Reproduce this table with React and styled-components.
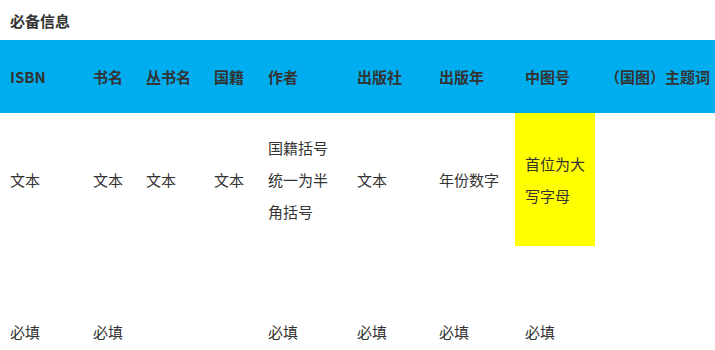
import React from 'react';
import styled, { createGlobalStyle } from 'styled-components';

const GlobalStyle = createGlobalStyle`
  html, body {
    margin: 0;
    padding: 0;
    background: #fff;
  }
  body {
    font-family: "Noto Sans CJK SC", "Noto Sans", sans-serif;
    color: #333;
  }
`

const Page = styled.div`
  width: 715px;
  overflow: hidden;
`

const Title = styled.h3`
  margin: 0;
  height: 40px;
  line-height: 42px;
  padding-left: 10px;
  font-size: 15px;
  font-weight: 700;
  color: #333;
`

const Table = styled.table`
  border-collapse: collapse;
  table-layout: fixed;
  width: 715px;
  font-size: 15px;
`

const HeadRow = styled.tr`
  background: #00aeef;
  height: 73px;
`

const Th = styled.th`
  padding: 0 10px;
  text-align: left;
  font-weight: 700;
  color: #333;
  white-space: nowrap;
  vertical-align: middle;
`

const Row = styled.tr`
  height: ${p => p.$h}px;
`

const Td = styled.td`
  padding: 18px 10px;
  line-height: 32px;
  vertical-align: middle;
  color: #333;
  background: ${p => (p.$mark ? '#ffff00' : 'transparent')};
  word-break: break-all;
`

const columns = [
  { name: 'ISBN', width: 83 },
  { name: '书名', width: 53 },
  { name: '丛书名', width: 68 },
  { name: '国籍', width: 54 },
  { name: '作者', width: 89 },
  { name: '出版社', width: 82 },
  { name: '出版年', width: 86 },
  { name: '中图号', width: 80 },
  { name: '（国图）主题词', width: 120 },
]

const formatRow = ['文本', '文本', '文本', '文本', '国籍括号统一为半角括号', '文本', '年份数字', '首位为大写字母', '']
const requiredRow = ['必填', '必填', '', '', '必填', '必填', '必填', '必填', '']

export default function App() {
  return (
    <Page>
      <GlobalStyle />
      <Title>必备信息</Title>
      <Table>
        <colgroup>
          {columns.map(c => <col key={c.name} style={{ width: c.width }} />)}
        </colgroup>
        <thead>
          <HeadRow>
            {columns.map(c => <Th key={c.name}>{c.name}</Th>)}
          </HeadRow>
        </thead>
        <tbody>
          <Row $h={133}>
            {formatRow.map((t, i) => <Td key={i} $mark={i === 7}>{t}</Td>)}
          </Row>
          <Row $h={172}>
            {requiredRow.map((t, i) => <Td key={i}>{t}</Td>)}
          </Row>
        </tbody>
      </Table>
    </Page>
  )
}
